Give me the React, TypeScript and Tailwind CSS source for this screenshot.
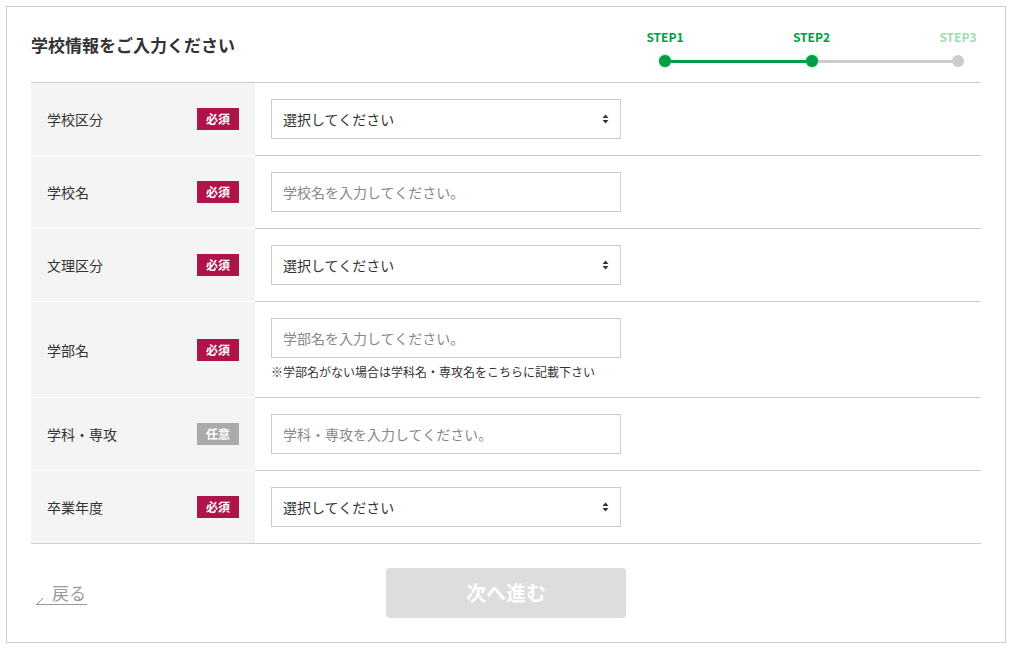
import React from 'react'

type Field = {
    label: string
    required: boolean
    kind: 'select' | 'input'
    placeholder?: string
    note?: string
}

const fields: Field[] = [
    { label: '学校区分', required: true, kind: 'select' },
    { label: '学校名', required: true, kind: 'input', placeholder: '学校名を入力してください。' },
    { label: '文理区分', required: true, kind: 'select' },
    {
        label: '学部名',
        required: true,
        kind: 'input',
        placeholder: '学部名を入力してください。',
        note: '※学部名がない場合は学科名・専攻名をこちらに記載下さい',
    },
    { label: '学科・専攻', required: false, kind: 'input', placeholder: '学科・専攻を入力してください。' },
    { label: '卒業年度', required: true, kind: 'select' },
]

function SelectArrows() {
    return (
        <svg width="7" height="10" viewBox="0 0 7 10" className="shrink-0">
            <path d="M3.5 0.5 L6.5 4 L0.5 4 Z" fill="#333" />
            <path d="M3.5 9.5 L6.5 6 L0.5 6 Z" fill="#333" />
        </svg>
    )
}

function Steps() {
    return (
        <div className="mt-[22px] w-[333px] self-start">
            <div className="flex justify-between text-[12px] font-bold leading-[16px]">
                <span className="w-[40px] text-center text-[#009e44]">STEP1</span>
                <span className="w-[40px] text-center text-[#009e44]">STEP2</span>
                <span className="w-[40px] text-center text-[#9fdcb4]">STEP3</span>
            </div>
            <div className="mt-[10px] flex items-center px-[14px]">
                <span className="h-3 w-3 rounded-full bg-[#009e44] shadow-[0_0_3px_rgba(0,158,68,0.6)]" />
                <span className="h-[3px] flex-1 bg-[#009e44]" />
                <span className="h-3 w-3 rounded-full bg-[#009e44] shadow-[0_0_3px_rgba(0,158,68,0.6)]" />
                <span className="h-[3px] flex-1 bg-[#cccccc]" />
                <span className="h-3 w-3 rounded-full bg-[#cccccc]" />
            </div>
        </div>
    )
}

export default function App() {
    return (
        <div className="min-h-[649px] bg-white pl-[6px] pt-[6px] font-['Noto_Sans_CJK_JP','Noto_Sans',sans-serif] text-[#333]">
            <div className="w-[1000px] h-[637px] border border-[#cccccc] pl-[24px] pr-[24px]">
                {/* Header */}
                <div className="flex h-[75px] items-center justify-between pr-[3px]">
                    <h1 className="text-[17px] font-bold leading-[24px] text-[#333]">学校情報をご入力ください</h1>
                    <Steps />
                </div>

                {/* Form table */}
                <div className="border-t border-b border-[#cccccc]">
                    {fields.map((f, i) => {
                        const last = i === fields.length - 1
                        return (
                            <div key={f.label} className="flex">
                                <div
                                    className={`flex w-[224px] items-center justify-between bg-[#f4f4f4] px-4 ${last ? '' : 'border-b border-white'}`}
                                >
                                    <span className="text-[14px] leading-[20px]">{f.label}</span>
                                    <span
                                        className={`flex h-[22px] w-[42px] items-center justify-center text-[12px] font-bold leading-none text-white ${f.required ? 'bg-[#b0124a]' : 'bg-[#aaaaaa]'}`}
                                    >
                                        {f.required ? '必須' : '任意'}
                                    </span>
                                </div>
                                <div className={`flex-1 py-4 pl-4 ${last ? '' : 'border-b border-[#cccccc]'}`}>
                                    {f.kind === 'select' ? (
                                        <div className="flex h-[40px] w-[350px] items-center justify-between border border-[#cccccc] bg-white pl-[11px] pr-[11px] text-[14px]">
                                            <span>選択してください</span>
                                            <SelectArrows />
                                        </div>
                                    ) : (
                                        <input
                                            className="block h-[40px] w-[350px] border border-[#cccccc] bg-white px-[11px] text-[14px] outline-none placeholder:text-[#888]"
                                            placeholder={f.placeholder}
                                        />
                                    )}
                                    {f.note && (
                                        <p className="mt-[5px] text-[12px] leading-[18px] text-[#333]">{f.note}</p>
                                    )}
                                </div>
                            </div>
                        )
                    })}
                </div>

                {/* Footer */}
                <div className="grid grid-cols-[1fr_240px_1fr] items-center pt-[24px]">
                    <div className="pl-[5px]">
                        <a href="#" className="relative inline-block border-b border-[#999] pb-[1px] pl-[16px] pr-[1px] text-[17px] leading-[21px] text-[#999]">
                            戻る
                            <svg width="8" height="8" viewBox="0 0 8 8" className="absolute -bottom-[1px] left-0">
                                <path d="M0.5 7.5 L7 1" stroke="#999" strokeWidth="1" fill="none" />
                            </svg>
                        </a>
                    </div>
                    <button className="h-[50px] w-[240px] rounded-[4px] bg-[#dddddd] text-[20px] font-bold text-white">
                        次へ進む
                    </button>
                    <div />
                </div>
            </div>
        </div>
    )
}
